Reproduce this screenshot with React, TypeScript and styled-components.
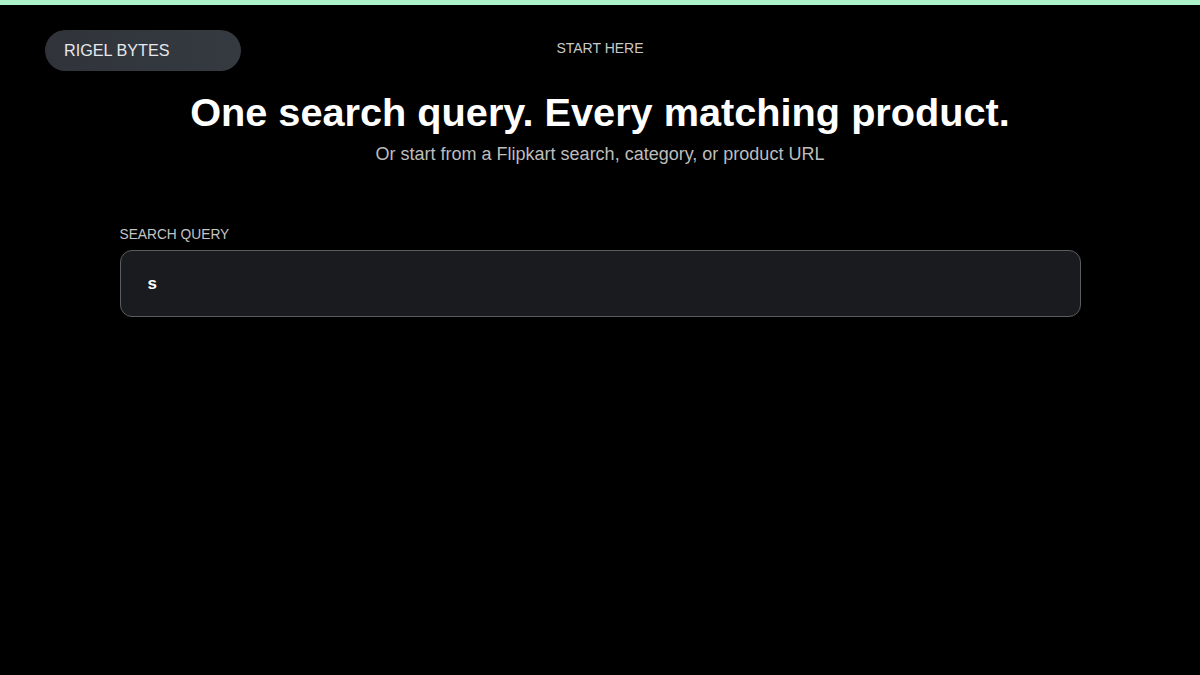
import React from 'react';
import styled, { createGlobalStyle } from 'styled-components';

const GlobalStyle = createGlobalStyle`
  html, body {
    margin: 0;
    padding: 0;
    background: #000;
    color: #fff;
    font-family: "Liberation Sans", Arial, sans-serif;
  }
`;

const Page = styled.div`
  min-height: 675px;
  background: #000;
  border-top: 5px solid #aef2c9;
  box-sizing: border-box;
`;

const Header = styled.header`
  display: grid;
  grid-template-columns: 1fr auto 1fr;
  align-items: center;
  padding: 25px 45px 0;
`;

const Brand = styled.div`
  justify-self: start;
  display: flex;
  align-items: center;
  width: 196px;
  height: 41px;
  box-sizing: border-box;
  padding: 0 19px;
  border-radius: 999px;
  background: linear-gradient(90deg, #30343a 0%, #353a41 100%);
  font-size: 16.2px;
  color: #e6e8ec;
`;

const Eyebrow = styled.div`
  font-size: 14px;
  color: #c9c9c9;
  margin-top: -5px;
`;

const Hero = styled.section`
  display: flex;
  flex-direction: column;
  align-items: center;
  padding-top: 18px;
`;

const Title = styled.h1`
  margin: 0;
  font-size: 39.7px;
  font-weight: 700;
  line-height: 46px;
  color: #fff;
`;

const Subtitle = styled.p`
  margin: 8px 0 0;
  font-size: 18px;
  line-height: 22px;
  color: #bdbdbd;
`;

const Form = styled.form`
  display: flex;
  flex-direction: column;
  gap: 8px;
  width: 961px;
  margin: 62px auto 0;
`;

const Label = styled.label`
  font-size: 13.75px;
  color: #c4c4c4;
`;

const Input = styled.input`
  height: 67px;
  box-sizing: border-box;
  padding: 0 27px;
  border: 1px solid #5a5c61;
  border-radius: 12px;
  background: #1a1b1f;
  color: #fff;
  font-family: "Liberation Sans", Arial, sans-serif;
  font-size: 17px;
  font-weight: 700;
  outline: none;
`;

export default function App() {
  return (
    <>
      <GlobalStyle />
      <Page>
        <Header>
          <Brand>RIGEL BYTES</Brand>
          <Eyebrow>START HERE</Eyebrow>
          <span />
        </Header>
        <Hero>
          <Title>One search query. Every matching product.</Title>
          <Subtitle>Or start from a Flipkart search, category, or product URL</Subtitle>
        </Hero>
        <Form onSubmit={e => e.preventDefault()}>
          <Label htmlFor="query">SEARCH QUERY</Label>
          <Input id="query" defaultValue="s" />
        </Form>
      </Page>
    </>
  );
}
